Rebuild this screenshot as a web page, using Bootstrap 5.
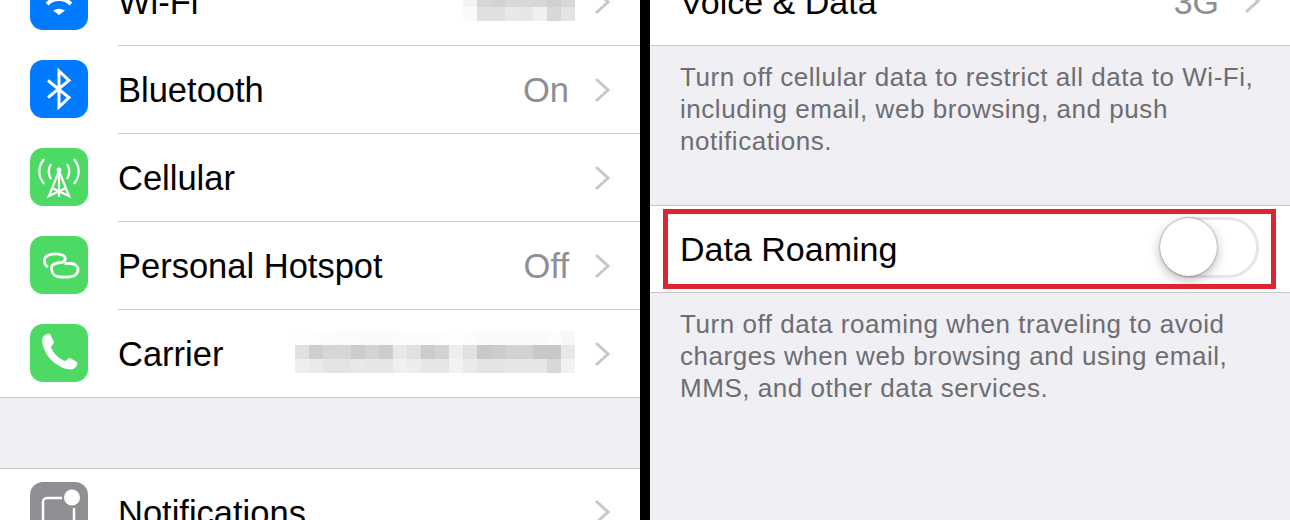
<!DOCTYPE html>
<html lang="en">
<head>
    <meta charset="UTF-8">
    <title>Data Roaming</title>
    <link rel="stylesheet" href="https://cdn.jsdelivr.net/npm/bootstrap@5.3.0/dist/css/bootstrap.min.css">
    <style>
        html, body { height: 520px; overflow: hidden; }
        body { background: #000; font-family: "Liberation Sans", Arial, sans-serif; color: #000; }
        .panes { height: 520px; gap: 10px; }
        .pane { width: 640px; height: 520px; overflow: hidden; background: #efeff4; flex: none; }
        .pull-up { margin-top: -42px; }
        .set-row { height: 88px; background: #fff; font-size: 34.5px; line-height: 1; }
        .set-icon { width: 58px; height: 58px; border-radius: 13px; margin: 0 30px 2px; flex: none; }
        .set-body { height: 100%; border-bottom: 1px solid #c8c7cc; padding: 2px 30px 0 0; }
        .set-row.end { border-bottom: 1px solid #c8c7cc; }
        .set-row.end .set-body { border-bottom: 0; }
        .set-row.top { border-top: 1px solid #c8c7cc; }
        .set-row.top .set-icon { margin-bottom: 3px; }
        .voice-row { padding: 0 30px; font-size: 34px; }
        .val { color: #8e8e93; margin-right: 25px; }
        .chev { width: 16px; height: 26px; flex: none; margin-bottom: 2px; }
        .ic-blue { background: #007aff; }
        .ic-green { background: #4cd964; }
        .ic-grey { background: #8e8e93; }
        .spacer { height: 70px; }
        .mosaic { display: grid; grid-auto-rows: 14px; grid-auto-columns: 14px; margin: 0 19px 6px 0; }
        .mosaic span { display: block; }
        .note { font-size: 26px; line-height: 32px; letter-spacing: .54px; color: #6d6d72; padding: 15px 30px 0; height: 159px; }
        .note.last { height: auto; }
        .roam-row { height: 88px; background: #fff; border-top: 1px solid #c8c7cc; border-bottom: 1px solid #c8c7cc; font-size: 34px; line-height: 1; padding: 0 30px; }
        .red-box { position: absolute; left: 13px; right: 14px; top: 3px; bottom: 3px; border: 5px solid #dc2433; pointer-events: none; }
        .tgl { width: 99px; height: 61px; border: 3px solid #e5e5ea; border-radius: 31px; background: #fff; margin: 0 1px 3px 0; }
        .tgl-knob { position: absolute; left: -3px; top: -2px; width: 57px; height: 58px; border-radius: 50%; background: #fff; box-shadow: 0 4px 12px rgba(0,0,0,.28), 0 0 2px rgba(0,0,0,.5); }
    </style>
</head>
<body>
    <div class="panes d-flex">
        <div class="pane">
            <div class="pull-up">
                <div class="set-row d-flex align-items-center">
                    <div class="set-icon ic-blue">
                        <svg width="58" height="58" viewBox="0 0 58 58"><g fill="none" stroke="#fff" stroke-width="4"><path d="M10 25a27 27 0 0 1 38 0"/><path d="M17 32a17 17 0 0 1 24 0"/></g><path d="M23 38.500Q29 35 35 38.500L29 43z" fill="#fff"/></svg>
                    </div>
                    <div class="set-body flex-grow-1 d-flex align-items-center">
                        <span class="flex-grow-1">Wi-Fi</span>
                        <div class="mosaic" data-cells="fe,fb,fb,fa,fa,fb,fa,fa;f4,d6,d2,d8,d8,d6,d0,d8;fa,e0,e0,e8,e6,f0,d8,e4"></div>
                        <svg class="chev" viewBox="0 0 16 26"><path d="M2 2l12 11L2 24" fill="none" stroke="#c7c7cc" stroke-width="3"/></svg>
                    </div>
                </div>
                <div class="set-row d-flex align-items-center">
                    <div class="set-icon ic-blue">
                        <svg width="58" height="58" viewBox="0 0 58 58"><path d="M18 20.500 39 37.500 29 47V11l10 9.500L18 37.500" fill="none" stroke="#fff" stroke-width="3"/></svg>
                    </div>
                    <div class="set-body flex-grow-1 d-flex align-items-center">
                        <span class="flex-grow-1">Bluetooth</span>
                        <span class="val">On</span>
                        <svg class="chev" viewBox="0 0 16 26"><path d="M2 2l12 11L2 24" fill="none" stroke="#c7c7cc" stroke-width="3"/></svg>
                    </div>
                </div>
                <div class="set-row d-flex align-items-center">
                    <div class="set-icon ic-green">
                        <svg width="58" height="58" viewBox="0 0 58 58"><g fill="none" stroke="#fff" stroke-width="2.200"><path d="M14 11c-6 8-6 17 0 25"/><path d="M21 16c-3 5-3 10 0 15"/><path d="M44 11c6 8 6 17 0 25"/><path d="M37 16c3 5 3 10 0 15"/><path d="M29 23v26"/><path d="M29 23 19 48l17-8"/><path d="M29 23l10 25-17-8"/></g><circle cx="29" cy="22" r="2.500" fill="#fff"/></svg>
                    </div>
                    <div class="set-body flex-grow-1 d-flex align-items-center">
                        <span class="flex-grow-1">Cellular</span>
                        <svg class="chev" viewBox="0 0 16 26"><path d="M2 2l12 11L2 24" fill="none" stroke="#c7c7cc" stroke-width="3"/></svg>
                    </div>
                </div>
                <div class="set-row d-flex align-items-center">
                    <div class="set-icon ic-green">
                        <svg width="58" height="58" viewBox="0 0 58 58"><path d="M18 31c-5-3-5-10 1-12 4-1.500 9-1.500 13 0 5 2 4 7-1 7.500-6 .5-10 2-9.500 6.500.3 5 4 8 9 8 5 .3 10 0 13-1 5-2 6-8 2-11-1-.8-2-1.300-4-1.500-3-.2-5-.2-7 0" fill="none" stroke="#fff" stroke-width="2.800"/></svg>
                    </div>
                    <div class="set-body flex-grow-1 d-flex align-items-center">
                        <span class="flex-grow-1">Personal Hotspot</span>
                        <span class="val">Off</span>
                        <svg class="chev" viewBox="0 0 16 26"><path d="M2 2l12 11L2 24" fill="none" stroke="#c7c7cc" stroke-width="3"/></svg>
                    </div>
                </div>
                <div class="set-row end d-flex align-items-center">
                    <div class="set-icon ic-green">
                        <svg width="58" height="58" viewBox="0 0 58 58"><path d="M13 13c2-3 5-4 7-3l4 8c0 2-2 3-3 5 2 6 8 12 14 14 2-1 3-3 5-3l7 4c1 3-1 6-4 7-3 1-8 0-12-2-8-4-15-11-18-21-1-3-1-7 0-9z" fill="#fff"/></svg>
                    </div>
                    <div class="set-body flex-grow-1 d-flex align-items-center">
                        <span>Carrier</span>
                        <span class="flex-grow-1"></span>
                        <div class="mosaic" data-cells="fe,fd,fc,fb,fb,fa,fa,fc,fc,fc,fd,fe,fc,fa,fa,fb,fa,fa,fc,f8;e0,cf,d6,d6,cc,d4,cc,e8,e0,cc,d2,ee,e0,c8,cc,d2,d2,c8,c8,e8;ee,ea,e4,e4,e8,e6,e6,f0,ec,e6,e6,f2,ea,e4,e4,e6,e6,e6,d8,f2"></div>
                        <svg class="chev" viewBox="0 0 16 26"><path d="M2 2l12 11L2 24" fill="none" stroke="#c7c7cc" stroke-width="3"/></svg>
                    </div>
                </div>
                <div class="spacer"></div>
                <div class="set-row top d-flex align-items-center">
                    <div class="set-icon ic-grey">
                        <svg width="58" height="58" viewBox="0 0 58 58"><path d="M32 16H17a4 4 0 0 0-4 4v22a4 4 0 0 0 4 4h23a4 4 0 0 0 4-4V26" fill="none" stroke="#fff" stroke-width="2.500"/><circle cx="42" cy="15.500" r="8" fill="#fff"/></svg>
                    </div>
                    <div class="set-body flex-grow-1 d-flex align-items-center">
                        <span class="flex-grow-1">Notifications</span>
                        <svg class="chev" viewBox="0 0 16 26"><path d="M2 2l12 11L2 24" fill="none" stroke="#c7c7cc" stroke-width="3"/></svg>
                    </div>
                </div>
            </div>
        </div>
        <div class="pane">
            <div class="pull-up">
                <div class="set-row end voice-row d-flex align-items-center">
                    <span class="flex-grow-1">Voice &amp; Data</span>
                    <span class="val">3G</span>
                    <svg class="chev" viewBox="0 0 16 26"><path d="M2 2l12 11L2 24" fill="none" stroke="#c7c7cc" stroke-width="3"/></svg>
                </div>
                <div class="note">Turn off cellular data to restrict all data to Wi-Fi, including email, web browsing, and push notifications.</div>
                <div class="roam-row position-relative d-flex align-items-center">
                    <span class="flex-grow-1">Data Roaming</span>
                    <div class="tgl position-relative"><div class="tgl-knob"></div></div>
                    <div class="red-box"></div>
                </div>
                <div class="note last">Turn off data roaming when traveling to avoid charges when web browsing and using email, MMS, and other data services.</div>
            </div>
        </div>
    </div>

    <script>
        // blurred-out values, one grey per 14px block
        document.querySelectorAll(".mosaic").forEach(m => {
            m.dataset.cells.split(";").forEach((row, r) => {
                row.split(",").forEach((c, i) => {
                    let cell = document.createElement("span");
                    cell.style.gridRow = r + 1;
                    cell.style.gridColumn = i + 1;
                    cell.style.background = "#" + c + c + c;
                    m.appendChild(cell);
                });
            });
        });
    </script>
    <script src="https://cdn.jsdelivr.net/npm/bootstrap@5.3.0/dist/js/bootstrap.bundle.min.js"></script>
</body>
</html>
